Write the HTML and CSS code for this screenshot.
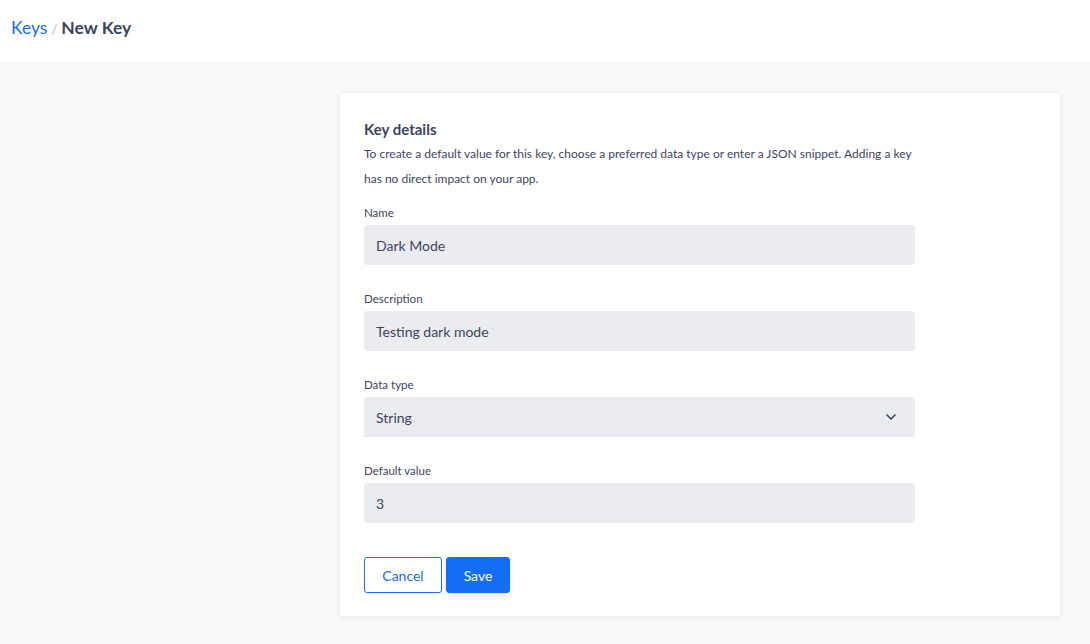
FILE: index.html
```html
<!DOCTYPE html>
<html lang="en">
<head>
<meta charset="utf-8">
<title>New Key</title>
<link rel="stylesheet" href="styles.css">
</head>
<body>
<header class="topbar">
  <nav class="crumbs">
    <a class="crumb-link" href="#">Keys</a>
    <span class="crumb-sep">/</span>
    <span class="crumb-current">New Key</span>
  </nav>
</header>
<main class="page">
  <section class="card">
    <h2 class="card-title">Key details</h2>
    <p class="card-desc">To create a default value for this key, choose a preferred data type or enter a JSON snippet. Adding a key has no direct impact on your app.</p>
    <div class="field">
      <label class="field-label">Name</label>
      <div class="input">Dark Mode</div>
    </div>
    <div class="field">
      <label class="field-label">Description</label>
      <div class="input">Testing dark mode</div>
    </div>
    <div class="field">
      <label class="field-label">Data type</label>
      <div class="input select">
        <span>String</span>
        <svg class="chevron" width="10" height="6" viewBox="0 0 10 6"><path d="M1 1l4 4 4-4" fill="none" stroke="#3d4462" stroke-width="1.6" stroke-linecap="round" stroke-linejoin="round"/></svg>
      </div>
    </div>
    <div class="field">
      <label class="field-label">Default value</label>
      <div class="input">3</div>
    </div>
    <div class="actions">
      <button class="btn btn-outline">Cancel</button>
      <button class="btn btn-primary">Save</button>
    </div>
  </section>
</main>
</body>
</html>
```
FILE: styles.css
```css
* { box-sizing: border-box; }
html, body { margin: 0; padding: 0; }
body {
  font-family: Lato, "Open Sans", Arial, sans-serif;
  color: #3d4462;
  background: #f9f9fa;
  width: 1090px;
  height: 644px;
  overflow: hidden;
}
.topbar {
  background: #fff;
  height: 61px;
  padding: 17px 11px 0;
}
.crumbs {
  display: flex;
  align-items: baseline;
  gap: 4px;
  font-size: 17.5px;
}
.crumb-link { color: #1a6cf0; text-decoration: none; }
.crumb-sep { color: #b4b8c4; font-size: 13px; }
.crumb-current { color: #3d4462; font-weight: 700; }
.page {
  padding: 32px 30px 0 340px;
}
.card {
  background: #fff;
  border-radius: 4px;
  box-shadow: 0 1px 6px rgba(0,0,0,0.07);
  padding: 26px 24px 23px;
  width: 720px;
}
.card-title {
  margin: 0;
  font-size: 15px;
  font-weight: 700;
  line-height: 20px;
}
.card-desc {
  margin: 2px 0 0;
  width: 555px;
  font-size: 12px;
  line-height: 25px;
  color: #3d4462;
}
.field { margin-top: 15px; }
.field + .field { margin-top: 27px; }
.field-label {
  display: block;
  font-size: 11.5px;
  line-height: 14px;
  margin-bottom: 5px;
}
.input {
  width: 551px;
  height: 40px;
  background: #ebecf0;
  border-radius: 4px;
  padding: 0 12px;
  display: flex;
  align-items: center;
  font-size: 14px;
  color: #3d4462;
}
.select {
  justify-content: space-between;
  border-radius: 4px 4px 0 0;
  padding-right: 19px;
}
.actions {
  display: flex;
  gap: 4px;
  margin-top: 34px;
}
.btn {
  height: 36px;
  border-radius: 3px;
  font-family: inherit;
  font-size: 14px;
  padding: 0;
}
.btn-outline {
  width: 78px;
  background: #fff;
  border: 1px solid #1a6cf0;
  color: #1a6cf0;
}
.btn-primary {
  width: 64px;
  background: #146ef5;
  border: 1px solid #146ef5;
  color: #fff;
  box-shadow: 0 2px 6px rgba(0,0,0,0.1);
}
```
